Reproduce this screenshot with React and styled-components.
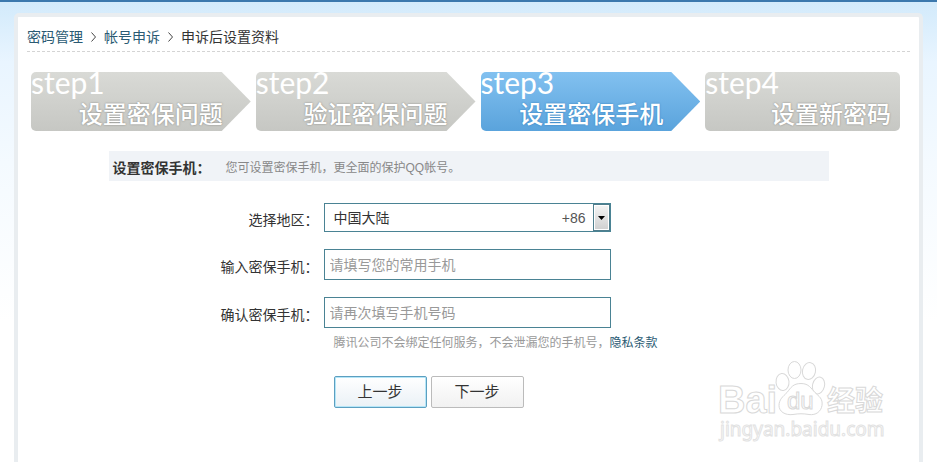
import React from "react";
import styled, { createGlobalStyle, css } from "styled-components";

const GlobalStyle = createGlobalStyle`
  * {
    box-sizing: border-box;
  }

  body {
    margin: 0;
    color: #333;
    font: 14px/20px "Liberation Sans", "Noto Sans CJK SC", sans-serif;
  }

  button, input, select {
    font: inherit;
  }
`;

const Page = styled.div`
  position: relative;
  display: flex;
  min-height: 100vh;
  padding: 11px 14px 0;
  border-top: 2px solid #3b78ad;
  background: linear-gradient(#d2eafb 0, #e9f5ff 60px, #f4faff 160px, #fff 320px);
`;

const Card = styled.main`
  flex: 1;
  min-width: 0;
  border: 4px solid #e9edf0;
  border-bottom: 0;
  border-radius: 5px 5px 0 0;
  background: #fff;
`;

const Breadcrumb = styled.nav`
  display: flex;
  align-items: center;
  gap: 8px;
  height: 35px;
  margin: 0 9px;
  padding-top: 5px;
  border-bottom: 1px dashed #d4d4d4;
`;

const Crumb = styled.a`
  color: #2a5a73;
  text-decoration: none;
`;

const Steps = styled.ol`
  display: flex;
  gap: 5px;
  margin: 20px 19px 0 13px;
  padding: 0;
  list-style: none;
`;

const arrow = css`
  clip-path: polygon(0 0, calc(100% - 29px) 0, 100% 50%, calc(100% - 29px) 100%, 0 100%);
`;

const Step = styled.li`
  display: flex;
  flex: 1 1 ${(props) => (props.$last ? 195 : 220)}px;
  flex-direction: column;
  height: 59px;
  padding-right: ${(props) => (props.$last ? 9 : props.$active ? 37 : 28)}px;
  border-radius: 5px;
  background: ${(props) =>
    props.$active
      ? "linear-gradient(#82c1f0, #5aa3dc)"
      : "linear-gradient(#d9dad6, #c6c7c3)"};
  color: #fff;
  white-space: nowrap;
  ${(props) => !props.$last && arrow}
`;

const StepNumber = styled.span`
  font: 400 30px/20px Lato, sans-serif;
`;

const StepTitle = styled.span`
  align-self: flex-end;
  font-size: 24px;
  font-weight: 500;
  line-height: 46px;
  text-shadow: 0 0 2px ${(props) => (props.$active ? "#2f7cbc" : "#80817e")};
`;

const Content = styled.section`
  max-width: 720px;
  margin: 20px auto 0;
`;

const Heading = styled.header`
  display: flex;
  align-items: center;
  gap: 15px;
  height: 30px;
  padding: 4px 4px 0;
  background: #f0f3f7;

  h1 {
    margin: 0;
    font-size: 14px;
    line-height: 20px;
  }
`;

const Note = styled.p`
  margin: 0;
  color: #888;
  font-size: 12px;
  line-height: 20px;
`;

const Form = styled.form`
  padding-top: 22px;
`;

const Row = styled.div`
  display: grid;
  grid-template-columns: 210px 287px;
  gap: 5px;
  align-items: center;
  margin-bottom: 17px;

  label {
    padding-top: 4px;
    text-align: right;
    white-space: nowrap;
  }
`;

const SelectBox = styled.div`
  position: relative;
`;

const Select = styled.select`
  display: block;
  width: 100%;
  height: 29px;
  padding: 0 50px 0 9px;
  border: 1px solid #4a8394;
  border-radius: 0;
  background: #fff;
  color: #333;
  appearance: none;
`;

const DialCode = styled.span`
  position: absolute;
  top: 5px;
  right: 25px;
  color: #555;
  pointer-events: none;
`;

const DropArrow = styled.span`
  position: absolute;
  top: 1px;
  right: 1px;
  bottom: 1px;
  display: flex;
  align-items: center;
  justify-content: center;
  width: 17px;
  border: 1px solid #4f7d8c;
  background: linear-gradient(#f5f5f5, #cfcfcf);
  box-shadow: inset 0 0 0 1px #fff;
  pointer-events: none;
`;

const Input = styled.input`
  width: 100%;
  height: 31px;
  padding: 0 5px;
  border: 1px solid #4a8394;
  background: #fff;
  color: #333;

  &::placeholder {
    color: #999;
    opacity: 1;
  }
`;

const Below = styled.div`
  margin-left: 225px;
`;

const Privacy = styled(Note)`
  margin-top: -12px;
  color: #999;
  white-space: nowrap;
`;

const Buttons = styled.div`
  display: flex;
  gap: 4px;
  margin-top: 23px;
`;

const Button = styled.button`
  width: 93px;
  height: 32px;
  padding: 0;
  border: 1px solid ${(props) => (props.$focused ? "#5c9fc0" : "#bbb")};
  border-radius: 2px;
  background: linear-gradient(#fff, ${(props) => (props.$focused ? "#eaf1f6" : "#f1f1f1")});
  box-shadow: ${(props) => (props.$focused ? "inset 0 0 0 1px #b5e6f8" : "none")};
  color: #333;
  font-size: 15px;
`;

const Watermark = styled.svg`
  position: absolute;
  right: 47px;
  bottom: 14px;
  width: 175px;
  height: 90px;
  pointer-events: none;
`;

const Chevron = () => (
  <svg width="5" height="10" viewBox="0 0 5 10" aria-hidden="true">
    <path d="M.5 .5 4.500 5 .5 9.500" fill="none" stroke="#444" />
  </svg>
);

const BaiduMark = () => (
  <Watermark viewBox="0 0 175 90" aria-hidden="true">
    <g fill="#fff" stroke="#d9d9d9">
      <text x="3" y="55" fontFamily="Liberation Sans" fontWeight="700" fontSize="38">
        Bai
      </text>
      <ellipse cx="67.500" cy="24" rx="6.500" ry="8.500" transform="rotate(-6 67.500 24)" />
      <ellipse cx="79.500" cy="12" rx="6.500" ry="8.500" />
      <ellipse cx="94" cy="13" rx="6.500" ry="8.500" transform="rotate(12 94 13)" />
      <ellipse cx="103.500" cy="27.500" rx="6" ry="8.500" transform="rotate(14 103.500 27.500)" />
      <path d="M86 25.500c8 0 10 5 14 9 4 4 8 6 7 13-1 6-6 10-13 9-6-1-10-1-16 0-8 1-14-3-14-9 0-6 4-9 8-13 4-5 6-9 14-9Z" />
      <text x="72" y="51" fontFamily="Liberation Sans" fontSize="24">
        du
      </text>
      <text x="112" y="53" fontFamily="Noto Sans CJK SC" fontWeight="700" fontSize="28">
        经验
      </text>
    </g>
    <text x="5" y="78" fill="#fff" stroke="#e2e2e2" fontFamily="Noto Sans" fontSize="19">
      jingyan.baidu.com
    </text>
  </Watermark>
);

const steps = ["设置密保问题", "验证密保问题", "设置密保手机", "设置新密码"];

const App = () => (
  <Page>
    <GlobalStyle />
    <Card>
      <Breadcrumb>
        <Crumb href="#">密码管理</Crumb>
        <Chevron />
        <Crumb href="#">帐号申诉</Crumb>
        <Chevron />
        <span>申诉后设置资料</span>
      </Breadcrumb>

      <Steps>
        {steps.map((title, i) => (
          <Step key={title} $active={i === 2} $last={i === 3}>
            <StepNumber>step{i + 1}</StepNumber>
            <StepTitle $active={i === 2}>{title}</StepTitle>
          </Step>
        ))}
      </Steps>

      <Content>
        <Heading>
          <h1>设置密保手机：</h1>
          <Note>您可设置密保手机，更全面的保护QQ帐号。</Note>
        </Heading>

        <Form onSubmit={(e) => e.preventDefault()}>
          <Row>
            <label htmlFor="region">选择地区：</label>
            <SelectBox>
              <Select id="region">
                <option>中国大陆</option>
              </Select>
              <DialCode>+86</DialCode>
              <DropArrow>
                <svg width="7" height="4" viewBox="0 0 7 4" aria-hidden="true">
                  <path d="M0 0h7L3.500 4Z" />
                </svg>
              </DropArrow>
            </SelectBox>
          </Row>
          <Row>
            <label htmlFor="phone">输入密保手机：</label>
            <Input id="phone" type="tel" placeholder="请填写您的常用手机" />
          </Row>
          <Row>
            <label htmlFor="confirm">确认密保手机：</label>
            <Input id="confirm" type="tel" placeholder="请再次填写手机号码" />
          </Row>
          <Below>
            <Privacy>
              腾讯公司不会绑定任何服务，不会泄漏您的手机号，
              <Crumb href="#">隐私条款</Crumb>
            </Privacy>
            <Buttons>
              <Button type="button" $focused>
                上一步
              </Button>
              <Button type="submit">下一步</Button>
            </Buttons>
          </Below>
        </Form>
      </Content>
    </Card>
    <BaiduMark />
  </Page>
);

export default App;
